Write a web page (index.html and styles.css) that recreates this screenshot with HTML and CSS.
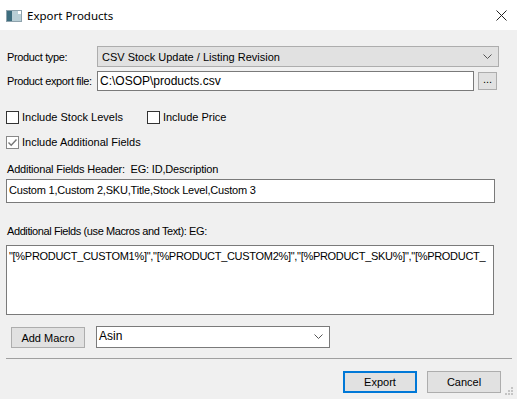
FILE: index.html
```html
<!DOCTYPE html>
<html lang="en">
<head>
  <meta charset="UTF-8">
  <title>Export Products</title>
  <link rel="stylesheet" href="styles.css">
</head>
<body>

  <div class="window">
    <div class="titlebar">
      <svg class="app-icon" width="16" height="12" viewBox="0 0 16 12">
        <rect x="0.5" y="0.5" width="15" height="11" fill="#dfe8ec" stroke="#8fa3ad"/>
        <rect x="1" y="1" width="5" height="10" fill="#3d6d7e"/>
        <rect x="6" y="1" width="9" height="10" fill="#b9cfd6"/>
        <rect x="12" y="1" width="3" height="3" fill="#ffffff"/>
      </svg>
      <span class="title">Export Products</span>
      <svg class="close" width="11" height="11" viewBox="0 0 11 11">
        <path d="M0.5 0.5 L10.5 10.5 M10.5 0.5 L0.5 10.5" stroke="#222" stroke-width="1"/>
      </svg>
    </div>

    <div class="content">
      <div class="row row-type">
        <label class="field-label">Product type:</label>
        <div class="combo combo-grey">
          <span>CSV Stock Update / Listing Revision</span>
          <svg class="chevron" width="9" height="5" viewBox="0 0 9 5"><path d="M0.5 0.5 L4.5 4.5 L8.5 0.5" fill="none" stroke="#555"/></svg>
        </div>
      </div>

      <div class="row row-file">
        <label class="field-label">Product export file:</label>
        <div class="textbox file-box">C:\OSOP\products.csv</div>
        <button class="browse">...</button>
      </div>

      <div class="row checks checks-first">
        <div class="check">
          <span class="box"></span>
          <span>Include Stock Levels</span>
        </div>
        <div class="check check-price">
          <span class="box"></span>
          <span>Include Price</span>
        </div>
      </div>

      <div class="row checks checks-second">
        <div class="check">
          <span class="box checked">
            <svg width="11" height="11" viewBox="0 0 11 11"><path d="M1.5 5.5 L4.2 8.2 L9.5 2.5" fill="none" stroke="#777" stroke-width="1.4"/></svg>
          </span>
          <span>Include Additional Fields</span>
        </div>
      </div>

      <div class="caption caption-header">Additional Fields Header:&nbsp; EG: ID,Description</div>
      <div class="textbox wide-box">Custom 1,Custom 2,SKU,Title,Stock Level,Custom 3</div>

      <div class="caption caption-fields">Additional Fields (use Macros and Text): EG:</div>
      <div class="textbox memo">"[%PRODUCT_CUSTOM1%]","[%PRODUCT_CUSTOM2%]","[%PRODUCT_SKU%]","[%PRODUCT_</div>

      <div class="row row-macro">
        <button class="btn btn-macro">Add Macro</button>
        <div class="combo combo-white">
          <span>Asin</span>
          <svg class="chevron" width="9" height="5" viewBox="0 0 9 5"><path d="M0.5 0.5 L4.5 4.5 L8.5 0.5" fill="none" stroke="#555"/></svg>
        </div>
      </div>

      <div class="separator"></div>

      <div class="row footer">
        <button class="btn btn-default">Export</button>
        <button class="btn">Cancel</button>
      </div>
    </div>

    <svg class="grip" width="10" height="10" viewBox="0 0 10 10">
      <rect x="7" y="1" width="2" height="2" fill="#c4c4c4"/>
      <rect x="4" y="4" width="2" height="2" fill="#c4c4c4"/>
      <rect x="7" y="4" width="2" height="2" fill="#c4c4c4"/>
      <rect x="1" y="7" width="2" height="2" fill="#c4c4c4"/>
      <rect x="4" y="7" width="2" height="2" fill="#c4c4c4"/>
      <rect x="7" y="7" width="2" height="2" fill="#c4c4c4"/>
    </svg>
  </div>

</body>
</html>
```

FILE: styles.css
```css
body {
  margin: 0;
  font-family: "Liberation Sans", Arial, sans-serif;
  font-size: 11px;
  color: #000;
  background-color: #f0f0f0;
}

.window {
  position: relative;
  width: 517px;
  height: 399px;
  overflow: hidden;
  background-color: #f0f0f0;
}

.titlebar {
  height: 30px;
  background-color: #fff;
  display: flex;
  align-items: center;
  padding-left: 6px;
}

.app-icon {
  margin-top: 1px;
}

.title {
  margin-left: 5px;
  font-family: "Noto Sans", "Open Sans", sans-serif;
  font-size: 11.5px;
  color: #000;
}

.close {
  margin-left: auto;
  margin-right: 10px;
}

.content {
  padding: 0 5px 0 6px;
}

.row {
  display: flex;
  align-items: flex-start;
}

.field-label {
  width: 91px;
  padding-left: 1px;
  box-sizing: border-box;
  line-height: 13px;
  white-space: nowrap;
  letter-spacing: -0.35px;
}

/* combo boxes */
.combo {
  box-sizing: border-box;
  display: flex;
  align-items: center;
  border: 1px solid #adadad;
  padding-left: 4px;
  padding-right: 6px;
}

.combo .chevron {
  margin-left: auto;
}

.combo-grey {
  width: 402px;
  height: 21px;
  background-color: #e1e1e1;
  font-size: 11px;
}

.combo-white {
  width: 234px;
  height: 22px;
  margin-left: 11px;
  background-color: #fff;
  border-color: #7a7a7a;
  padding-left: 2px;
  padding-bottom: 1px;
}

.combo-white span {
  align-self: flex-start;
  margin-top: 2px;
  font-size: 12px;
}

.row-type {
  margin-top: 16px;
  align-items: center;
}

.row-type .field-label {
  padding-top: 1px;
}

/* text boxes */
.textbox {
  box-sizing: border-box;
  background-color: #fff;
  border: 1px solid #7a7a7a;
  white-space: nowrap;
  overflow: hidden;
  font-size: 11px;
  padding-left: 2px;
}

.row-file {
  margin-top: 4px;
  align-items: center;
}

.file-box {
  width: 377px;
  height: 20px;
  line-height: 18px;
  font-size: 12px;
}

.browse {
  box-sizing: border-box;
  width: 19px;
  height: 18px;
  margin-left: 4px;
  padding: 0 0 4px;
  border: 1px solid #adadad;
  background-color: #e1e1e1;
  font-family: inherit;
  font-size: 11px;
}

/* check boxes */
.checks {
  align-items: center;
  line-height: 13px;
}

.checks-first {
  margin-top: 20px;
}

.checks-second {
  margin-top: 12px;
}

.check {
  display: flex;
  align-items: center;
}

.check-price {
  margin-left: 24px;
}

.box {
  box-sizing: border-box;
  width: 13px;
  height: 13px;
  margin-right: 3px;
  border: 1px solid #333;
  background-color: #fff;
  display: flex;
  align-items: center;
  justify-content: center;
}

.box.checked {
  border-color: #888;
}

/* captions */
.caption {
  padding-left: 1px;
  line-height: 13px;
  white-space: nowrap;
}

.caption-header {
  margin-top: 14px;
  letter-spacing: -0.2px;
}

.wide-box {
  width: 489px;
  height: 24px;
  margin-top: 3px;
  line-height: 21px;
  letter-spacing: -0.2px;
}

.caption-fields {
  margin-top: 22px;
  letter-spacing: -0.4px;
}

.memo {
  width: 488px;
  height: 70px;
  margin-top: 7px;
  padding-top: 3px;
  line-height: 14px;
  letter-spacing: -0.3px;
}

/* buttons */
.btn {
  box-sizing: border-box;
  width: 74px;
  height: 22px;
  border: 1px solid #adadad;
  background-color: #e1e1e1;
  font-family: inherit;
  font-size: 11px;
  color: #000;
  padding: 0;
}

.row-macro {
  margin-top: 11px;
}

.btn-macro {
  margin-left: 5px;
  margin-top: 1px;
  height: 21px;
}

.separator {
  margin-top: 10px;
  height: 1px;
  width: 506px;
  background-color: #a0a0a0;
}

.footer {
  margin-top: 12px;
  justify-content: flex-end;
  gap: 10px;
  padding-right: 11px;
}

.btn-default {
  border: 2px solid #0078d7;
}

.grip {
  position: absolute;
  right: 3px;
  bottom: 3px;
}
```
